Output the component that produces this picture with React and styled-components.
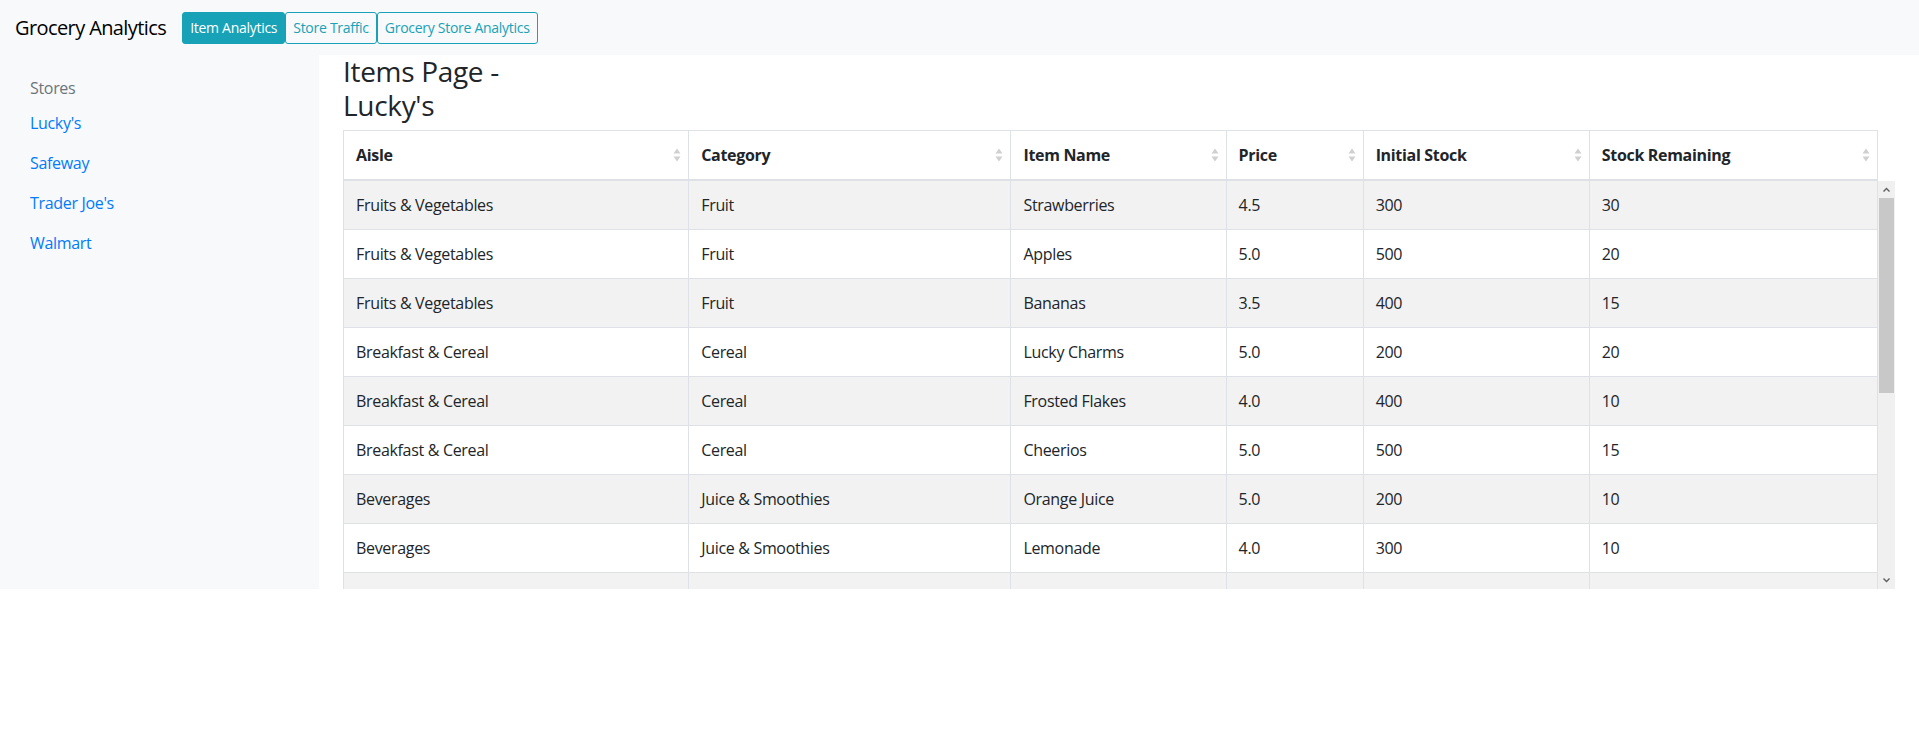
import React from "react";
import styled, { createGlobalStyle } from "styled-components";

const GlobalStyle = createGlobalStyle`
  * { box-sizing: border-box; }
  body {
    margin: 0;
    background: #fff;
    color: #212529;
    font-family: "Open Sans", "Noto Sans", sans-serif;
    font-size: 16px;
    line-height: 1.5;
    letter-spacing: -0.02em;
  }
`;

const ROW_HEIGHT = 49;
const VIEW_HEIGHT = 408;
const ARROW = 17;

const columns = [
  { key: "aisle", label: "Aisle", width: 345 },
  { key: "category", label: "Category", width: 322 },
  { key: "name", label: "Item Name", width: 215 },
  { key: "price", label: "Price", width: 137 },
  { key: "initial", label: "Initial Stock", width: 226 },
  { key: "remaining", label: "Stock Remaining", width: 288 },
];

const items = [
  ["Fruits & Vegetables", "Fruit", "Strawberries", "4.5", "300", "30"],
  ["Fruits & Vegetables", "Fruit", "Apples", "5.0", "500", "20"],
  ["Fruits & Vegetables", "Fruit", "Bananas", "3.5", "400", "15"],
  ["Breakfast & Cereal", "Cereal", "Lucky Charms", "5.0", "200", "20"],
  ["Breakfast & Cereal", "Cereal", "Frosted Flakes", "4.0", "400", "10"],
  ["Breakfast & Cereal", "Cereal", "Cheerios", "5.0", "500", "15"],
  ["Beverages", "Juice & Smoothies", "Orange Juice", "5.0", "200", "10"],
  ["Beverages", "Juice & Smoothies", "Lemonade", "4.0", "300", "10"],
  ["Beverages", "Soda", "Coca-Cola", "2.0", "600", "45"],
  ["Beverages", "Soda", "Sprite", "2.0", "400", "35"],
  ["Dairy", "Milk", "Whole Milk", "3.5", "300", "25"],
  ["Dairy", "Cheese", "Cheddar", "6.0", "200", "12"],
  ["Dairy", "Yogurt", "Greek Yogurt", "1.5", "500", "40"],
  ["Bakery", "Bread", "Sourdough", "4.5", "150", "8"],
  ["Bakery", "Bread", "Bagels", "3.0", "250", "18"],
  ["Snacks", "Chips", "Potato Chips", "3.0", "350", "22"],
];

const stores = ["Lucky's", "Safeway", "Trader Joe's", "Walmart"];

const SortCaret = () => (
  <svg width="8" height="14" viewBox="0 0 8 14">
    <path d="M4 0.5L7.5 5.5H0.5z" fill="#d0d0d0" />
    <path d="M4 13.5L7.5 8.5H0.5z" fill="#d0d0d0" />
  </svg>
);

const Chevron = ({ down }) => (
  <svg width="9" height="9" viewBox="0 0 9 9">
    <path
      d={down ? "M1 3l3.5 3.5L8 3 7 2 4.5 4.5 2 2z" : "M1 6l3.5-3.5L8 6 7 7 4.5 4.5 2 7z"}
      fill="#606060"
    />
  </svg>
);

const Scrollbar = ({ total }) => {
  const track = VIEW_HEIGHT - ARROW * 2;
  const thumb = Math.round((VIEW_HEIGHT / total) * track);
  return (
    <ScrollTrack>
      <ScrollButton>
        <Chevron />
      </ScrollButton>
      <ThumbArea>
        <Thumb style={{ height: thumb }} />
      </ThumbArea>
      <ScrollButton>
        <Chevron down />
      </ScrollButton>
    </ScrollTrack>
  );
};

export default function App() {
  return (
    <>
      <GlobalStyle />
      <Navbar>
        <Brand>Grocery Analytics</Brand>
        <NavButton $active>Item Analytics</NavButton>
        <NavButton>Store Traffic</NavButton>
        <NavButton>Grocery Store Analytics</NavButton>
      </Navbar>
      <Layout>
        <Sidebar>
          <SideHeading>Stores</SideHeading>
          {stores.map((s) => (
            <SideLink key={s} href="#">
              {s}
            </SideLink>
          ))}
        </Sidebar>
        <Main>
          <Title>Items Page - Lucky's</Title>
          <TableWrap>
            <HeadTable>
              <colgroup>
                {columns.map((c) => (
                  <col key={c.key} style={{ width: c.width }} />
                ))}
              </colgroup>
              <thead>
                <tr>
                  {columns.map((c) => (
                    <Th key={c.key}>
                      {c.label}
                      <CaretSlot>
                        <SortCaret />
                      </CaretSlot>
                    </Th>
                  ))}
                </tr>
              </thead>
            </HeadTable>
            <BodyFrame>
              <BodyViewport>
                <BodyTable>
                  <colgroup>
                    {columns.map((c) => (
                      <col key={c.key} style={{ width: c.width }} />
                    ))}
                  </colgroup>
                  <tbody>
                    {items.map((row, i) => (
                      <Row key={i} $striped={i % 2 === 0}>
                        {row.map((v, j) => (
                          <Td key={j}>{v}</Td>
                        ))}
                      </Row>
                    ))}
                  </tbody>
                </BodyTable>
              </BodyViewport>
              <Scrollbar total={items.length * ROW_HEIGHT} />
            </BodyFrame>
          </TableWrap>
        </Main>
      </Layout>
    </>
  );
}

const Navbar = styled.nav`
  height: 55px;
  display: flex;
  align-items: center;
  padding: 0 15px;
  background: #f8f9fa;
`;

const Brand = styled.span`
  font-size: 20px;
  line-height: 30px;
  letter-spacing: -0.03em;
  margin-right: 16px;
  color: #000;
  white-space: nowrap;
`;

const NavButton = styled.button`
  height: 32px;
  padding: 0 7px;
  font-family: inherit;
  font-size: 14px;
  letter-spacing: -0.02em;
  line-height: 1.5;
  border: 1px solid #17a2b8;
  border-radius: 3px;
  background: ${(p) => (p.$active ? "#17a2b8" : "transparent")};
  color: ${(p) => (p.$active ? "#fff" : "#17a2b8")};
  cursor: pointer;
  white-space: nowrap;
`;

const Layout = styled.div`
  display: flex;
  height: 534px;
`;

const Sidebar = styled.aside`
  width: 319px;
  flex-shrink: 0;
  background: #f8f9fa;
  padding: 21px 14px;
  display: flex;
  flex-direction: column;
`;

const SideHeading = styled.div`
  padding: 0 16px 3px;
  color: #6c757d;
`;

const SideLink = styled.a`
  display: block;
  padding: 8px 16px;
  color: #007bff;
  text-decoration: none;
`;

const Main = styled.main`
  flex: 1;
  min-width: 0;
  background: #fff;
  padding: 0 24px;
  display: flex;
  flex-direction: column;
`;

const Title = styled.h3`
  width: 200px;
  margin: 0 0 8px;
  font-size: 28px;
  font-weight: 400;
  line-height: 1.2;
`;

const TableWrap = styled.div`
  display: flex;
  flex-direction: column;
`;

const HeadTable = styled.table`
  width: calc(100% - ${ARROW}px);
  table-layout: fixed;
  border-collapse: collapse;
`;

const Th = styled.th`
  position: relative;
  text-align: left;
  font-weight: 700;
  padding: 12px;
  border: 1px solid #dee2e6;
  border-bottom-width: 2px;
  white-space: nowrap;
`;

const CaretSlot = styled.span`
  position: absolute;
  right: 7px;
  top: 50%;
  transform: translateY(-50%);
  display: flex;
`;

const BodyFrame = styled.div`
  display: flex;
  height: ${VIEW_HEIGHT + 1}px;
  border-bottom: 1px solid #dee2e6;
`;

const BodyViewport = styled.div`
  flex: 1;
  min-width: 0;
  overflow: hidden;
`;

const BodyTable = styled.table`
  width: 100%;
  table-layout: fixed;
  border-collapse: collapse;
`;

const Row = styled.tr`
  background: ${(p) => (p.$striped ? "#f2f2f2" : "#fff")};
  &:first-child td {
    border-top: 0;
  }
`;

const Td = styled.td`
  padding: 12px;
  border: 1px solid #dee2e6;
  white-space: nowrap;
`;

const ScrollTrack = styled.div`
  width: ${ARROW}px;
  flex-shrink: 0;
  background: #f0f0f0;
  display: flex;
  flex-direction: column;
`;

const ScrollButton = styled.div`
  height: ${ARROW}px;
  display: flex;
  align-items: center;
  justify-content: center;
`;

const ThumbArea = styled.div`
  flex: 1;
  padding: 0 1px;
`;

const Thumb = styled.div`
  background: #c8c8c8;
`;
